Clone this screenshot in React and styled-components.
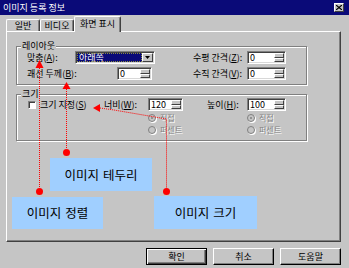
import React from "react";
import styled, { createGlobalStyle } from "styled-components";

const GlobalStyle = createGlobalStyle`
  html, body {
    margin: 0;
    padding: 0;
    background: #c5c5c5;
  }
  body {
    font-family: "Noto Sans CJK KR", "Liberation Sans", sans-serif;
    font-size: 9px;
    line-height: 11px;
    color: #000;
  }
  * {
    box-sizing: border-box;
  }
`;

const Window = styled.div`
  position: relative;
  width: 349px;
  height: 268px;
  background: #c5c5c5;
  overflow: hidden;
`;

const TitleBar = styled.div`
  height: 15px;
  background: #0a0a78;
  color: #fff;
  display: flex;
  align-items: center;
  justify-content: space-between;
  padding: 0 5px 0 3px;
  line-height: 15px;
`;

const CloseButton = styled.div`
  width: 10px;
  height: 9px;
  background: #c5c5c5;
  border-top: 1px solid #fff;
  border-left: 1px solid #fff;
  border-right: 1px solid #404040;
  border-bottom: 1px solid #404040;
  display: flex;
  align-items: center;
  justify-content: center;
`;

const TabRow = styled.div`
  margin-top: 1px;
  height: 15px;
  display: flex;
  align-items: flex-end;
  padding-left: 6px;
  position: relative;
  z-index: 1;
`;

const Tab = styled.div`
  width: ${(p) => p.$w}px;
  height: ${(p) => (p.$active ? 16 : 12)}px;
  margin-bottom: ${(p) => (p.$active ? -1 : 0)}px;
  background: #c5c5c5;
  border-top: 1px solid #fff;
  border-left: 1px solid #fff;
  border-right: 1px solid #404040;
  box-shadow: inset -1px 0 0 #808080;
  border-radius: 2px 2px 0 0;
  display: flex;
  align-items: ${(p) => (p.$active ? "flex-start" : "center")};
  padding-top: ${(p) => (p.$active ? 2 : 0)}px;
  justify-content: center;
  white-space: nowrap;
  line-height: 10px;
`;

const Panel = styled.div`
  margin: 0 8px 0 6px;
  height: 211px;
  border-top: 1px solid #fff;
  border-left: 1px solid #fff;
  border-right: 1px solid #404040;
  border-bottom: 1px solid #404040;
  box-shadow: inset -1px -1px 0 #808080;
  padding: 8px 33px 0 9px;
`;

const Group = styled.fieldset`
  margin: ${(p) => p.$gap || 0}px 0 0 0;
  padding: 0 6px ${(p) => p.$pb}px 10px;
  border: 1px solid #808080;
  box-shadow: inset 1px 1px 0 #fff, 1px 1px 0 #fff;
  min-width: 0;
`;

const Legend = styled.legend`
  padding: 0 1px;
  margin-left: -6px;
  height: 12px;
  line-height: 12px;
  background: #c5c5c5;
`;

const LayoutGrid = styled.div`
  display: grid;
  grid-template-columns: 166px 1fr;
  row-gap: 3px;
  margin-top: -1px;
`;

const Field = styled.div`
  display: flex;
  align-items: center;
  height: 13px;
`;

const FieldLabel = styled.span`
  width: ${(p) => p.$w}px;
  white-space: nowrap;
`;

const Sunken = styled.div`
  width: ${(p) => p.$w}px;
  height: 13px;
  background: #fff;
  border-top: 1px solid #808080;
  border-left: 1px solid #808080;
  border-right: 1px solid #fff;
  border-bottom: 1px solid #fff;
  box-shadow: inset 1px 1px 0 #404040, inset -1px -1px 0 #d8d8d8;
  display: flex;
  align-items: stretch;
  padding: 1px;
`;

const Selection = styled.span`
  flex: 1;
  background: #0a0a78;
  color: #fff;
  line-height: 9px;
  padding-left: 2px;
  outline: 1px dotted #8c8c40;
  outline-offset: -1px;
`;

const ValueText = styled.span`
  flex: 1;
  line-height: 9px;
  padding-left: 1px;
`;

const DropButton = styled.span`
  width: 11px;
  background: #c5c5c5;
  border-top: 1px solid #fff;
  border-left: 1px solid #fff;
  border-right: 1px solid #404040;
  border-bottom: 1px solid #404040;
  display: flex;
  align-items: center;
  justify-content: center;
`;

const SpinButtons = styled.span`
  width: 10px;
  display: flex;
  flex-direction: column;
`;

const SpinHalf = styled.span`
  flex: 1;
  background: #c5c5c5;
  border-top: 1px solid #fff;
  border-left: 1px solid #fff;
  border-right: 1px solid #404040;
  border-bottom: 1px solid #404040;
`;

const SizeGrid = styled.div`
  display: grid;
  grid-template-columns: 77px 44px 59px 40px 1fr;
  grid-template-rows: 14px 12px 12px;
  align-items: start;
  margin-top: -2px;
`;

const CheckRow = styled.div`
  display: flex;
  align-items: center;
  height: 13px;
  padding-left: 1px;
  white-space: nowrap;
`;

const CheckBox = styled.span`
  width: 8px;
  height: 8px;
  flex: none;
  background: #fff;
  border-top: 1px solid #808080;
  border-left: 1px solid #808080;
  border-right: 1px solid #fff;
  border-bottom: 1px solid #fff;
  box-shadow: inset 1px 1px 0 #404040;
  margin-right: 4px;
`;

const RadioRow = styled.div`
  grid-column: ${(p) => p.$col};
  display: flex;
  align-items: center;
  height: 12px;
  font-size: 8px;
  line-height: 10px;
  color: #858585;
  text-shadow: 1px 1px 0 #fff;
  white-space: nowrap;
`;

const RadioCircle = styled.span`
  width: 8px;
  height: 8px;
  flex: none;
  border-radius: 50%;
  background: #c5c5c5;
  border: 1px solid #808080;
  box-shadow: 1px 1px 0 #fff;
  margin-right: 4px;
  display: flex;
  align-items: center;
  justify-content: center;
  &::after {
    content: "";
    width: 2px;
    height: 2px;
    border-radius: 50%;
    background: ${(p) => (p.$checked ? "#808080" : "transparent")};
  }
`;

const Footer = styled.div`
  display: flex;
  justify-content: flex-end;
  gap: 6px;
  padding: 6px 8px 0 0;
`;

const Button = styled.button`
  width: 61px;
  height: 17px;
  padding: 0;
  font: inherit;
  color: #000;
  background: #c5c5c5;
  border: 1px solid ${(p) => (p.$default ? "#000" : "transparent")};
  border-top-color: ${(p) => (p.$default ? "#000" : "#fff")};
  border-left-color: ${(p) => (p.$default ? "#000" : "#fff")};
  border-right-color: #000;
  border-bottom-color: #000;
  box-shadow: ${(p) =>
    p.$default
      ? "inset 1px 1px 0 #fff, inset -1px -1px 0 #404040, inset -2px -2px 0 #808080"
      : "inset -1px -1px 0 #808080"};
`;

const Overlay = styled.div`
  position: absolute;
  inset: 0;
  pointer-events: none;
`;

const Callout = styled.div`
  position: absolute;
  left: ${(p) => p.$x}px;
  top: ${(p) => p.$y}px;
  width: ${(p) => p.$w}px;
  height: ${(p) => p.$h}px;
  background: #a0cfff;
  display: flex;
  align-items: center;
  justify-content: center;
  font-size: 12.5px;
  line-height: 16px;
  word-spacing: 1px;
  color: #000;
`;

function Spin({ w, value }) {
  return (
    <Sunken $w={w}>
      <ValueText>{value}</ValueText>
      <SpinButtons>
        <SpinHalf />
        <SpinHalf />
      </SpinButtons>
    </Sunken>
  );
}

export default function App() {
  return (
    <Window>
      <GlobalStyle />
      <TitleBar>
        <span>이미지 등록 정보</span>
        <CloseButton>
          <svg width="6" height="5" viewBox="0 0 6 5">
            <path d="M0 0 L6 5 M6 0 L0 5" stroke="#000" strokeWidth="1.2" />
          </svg>
        </CloseButton>
      </TitleBar>

      <TabRow>
        <Tab $w={34}>일반</Tab>
        <Tab $w={34}>비디오</Tab>
        <Tab $w={47} $active>
          화면 표시
        </Tab>
      </TabRow>

      <Panel>
        <Group $pb={4}>
          <Legend>레이아웃</Legend>
          <LayoutGrid>
            <Field>
              <FieldLabel $w={48}>
                맞춤(<u>A</u>):
              </FieldLabel>
              <Sunken $w={80}>
                <Selection>아래쪽</Selection>
                <DropButton>
                  <svg width="5" height="3" viewBox="0 0 5 3">
                    <path d="M0 0 H5 L2.5 3 Z" fill="#000" />
                  </svg>
                </DropButton>
              </Sunken>
            </Field>
            <Field>
              <FieldLabel $w={54}>
                수평 간격(<u>Z</u>):
              </FieldLabel>
              <Spin w={39} value="0" />
            </Field>
            <Field>
              <FieldLabel $w={90}>
                괘선 두께(<u>B</u>):
              </FieldLabel>
              <Spin w={35} value="0" />
            </Field>
            <Field>
              <FieldLabel $w={54}>
                수직 간격(<u>V</u>):
              </FieldLabel>
              <Spin w={39} value="0" />
            </Field>
          </LayoutGrid>
        </Group>

        <Group $gap={3} $pb={4}>
          <Legend>크기</Legend>
          <SizeGrid>
            <CheckRow>
              <CheckBox />
              크기 지정(<u>S</u>)
            </CheckRow>
            <Field>
              <FieldLabel>
                너비(<u>W</u>):
              </FieldLabel>
            </Field>
            <Spin w={35} value="120" />
            <Field>
              <FieldLabel>
                높이(<u>H</u>):
              </FieldLabel>
            </Field>
            <Spin w={39} value="100" />
            <RadioRow $col={3}>
              <RadioCircle $checked />
              직접
            </RadioRow>
            <RadioRow $col={5}>
              <RadioCircle $checked />
              직접
            </RadioRow>
            <RadioRow $col={3}>
              <RadioCircle />
              퍼센트
            </RadioRow>
            <RadioRow $col={5}>
              <RadioCircle />
              퍼센트
            </RadioRow>
          </SizeGrid>
        </Group>
      </Panel>

      <Footer>
        <Button $default>확인</Button>
        <Button>취소</Button>
        <Button>도움말</Button>
      </Footer>

      <Overlay>
        <svg width="349" height="268" viewBox="0 0 349 268">
          <g stroke="#f00" strokeWidth="1" strokeDasharray="1 1" fill="none">
            <path d="M39.5 68 V188" />
            <path d="M66.5 89 V149" />
            <polyline points="100,108 114,110 166.5,119 166.5,188" />
          </g>
          <g fill="#f00">
            <polygon points="39.5,60 35.5,68 43.5,68" />
            <polygon points="66.5,82 62.5,89 70.5,89" />
            <polygon points="93,108 100,104 100,112" />
            <circle cx="39.5" cy="191.5" r="3.5" />
            <circle cx="66.5" cy="152.5" r="3.5" />
            <circle cx="166.5" cy="191.5" r="3.5" />
          </g>
        </svg>
        <Callout $x={50} $y={158} $w={102} $h={33}>
          이미지 테두리
        </Callout>
        <Callout $x={12} $y={197} $w={91} $h={32}>
          이미지 정렬
        </Callout>
        <Callout $x={154} $y={196} $w={103} $h={33}>
          이미지 크기
        </Callout>
      </Overlay>
    </Window>
  );
}
